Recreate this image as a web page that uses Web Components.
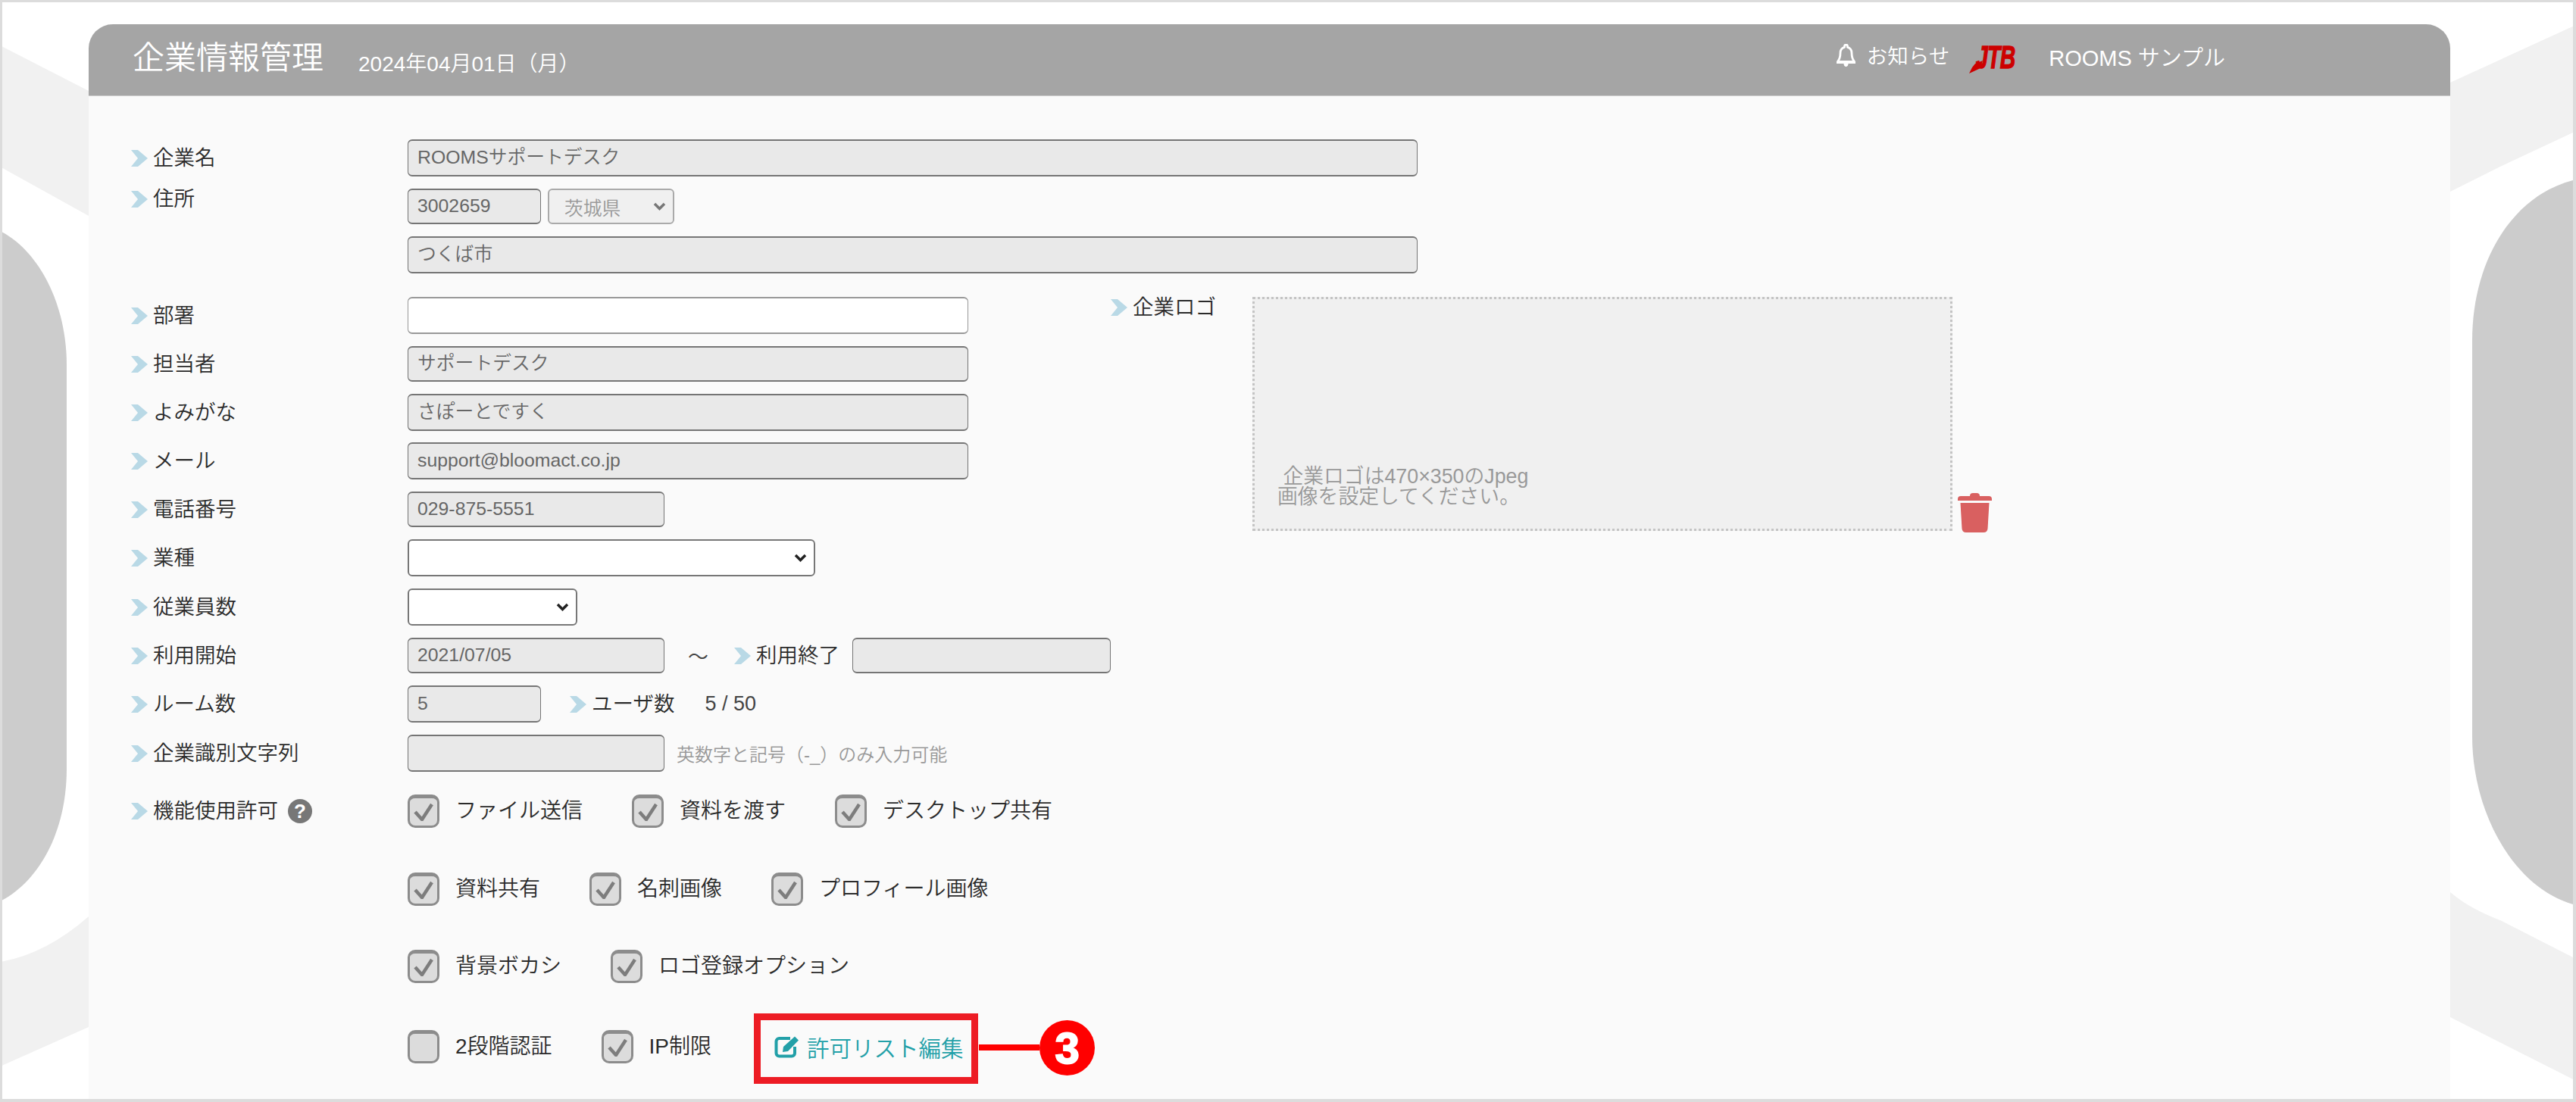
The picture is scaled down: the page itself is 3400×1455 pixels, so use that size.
<!DOCTYPE html>
<html lang="ja">
<head>
<meta charset="utf-8">
<title>企業情報管理</title>
<style>
  html, body { margin: 0; padding: 0; background: #fff; }
  body { font-family: "Liberation Sans", "Noto Sans CJK JP", sans-serif; font-weight: 350; color: #333; font-size: 27.5px; }
</style>
</head>
<body>
<page-frame>
  <panel-card>
    <panel-header slot="header" title-text="企業情報管理" date="2024年04月01日（月）" notice="お知らせ" user="ROOMS サンプル"></panel-header>

    <form-row label="企業名"><text-field width="1333" value="ROOMSサポートデスク"></text-field></form-row>
    <form-row label="住所" top gap="16">
      <text-field width="176" height="47" value="3002659"></text-field>
      <select-field width="167" height="47" value="茨城県" disabled style="margin-left:9px"></select-field>
    </form-row>
    <form-row gap="16"><text-field width="1333" value="つくば市"></text-field></form-row>

    <company-split style="margin-top:31px">
      <form-row label="部署"><text-field width="740" value="" enabled></text-field></form-row>
      <form-row label="担当者" gap="16"><text-field width="740" height="47" value="サポートデスク"></text-field></form-row>
      <form-row label="よみがな" gap="16"><text-field width="740" value="さぽーとですく"></text-field></form-row>
      <form-row label="メール" gap="15"><text-field width="740" value="support@bloomact.co.jp"></text-field></form-row>
      <form-row label="電話番号" gap="16"><text-field width="339" height="47" value="029-875-5551"></text-field></form-row>
      <form-row label="業種" gap="16"><select-field width="538" height="49"></select-field></form-row>
      <form-row label="従業員数" gap="16"><select-field width="224" height="49"></select-field></form-row>
      <form-row label="利用開始" gap="16">
        <text-field width="339" height="47" value="2021/07/05"></text-field>
        <plain-text style="margin-left:31px;margin-right:34px">～</plain-text>
        <form-label>利用終了</form-label>
        <text-field width="341" height="47" value="" style="margin-left:17px"></text-field>
      </form-row>
      <form-row label="ルーム数" gap="16">
        <text-field width="176" value="5"></text-field>
        <form-label style="margin-left:38px">ユーザ数</form-label>
        <plain-text style="margin-left:40px">5 / 50</plain-text>
      </form-row>
      <form-row label="企業識別文字列" gap="16">
        <text-field width="339" value=""></text-field>
        <plain-text hint style="margin-left:16px">英数字と記号（-_）のみ入力可能</plain-text>
      </form-row>
      <form-row label="機能使用許可" help gap="30">
        <check-item checked>ファイル送信</check-item>
        <check-item checked>資料を渡す</check-item>
        <check-item checked>デスクトップ共有</check-item>
      </form-row>
      <form-row gap="59">
        <check-item checked>資料共有</check-item>
        <check-item checked>名刺画像</check-item>
        <check-item checked>プロフィール画像</check-item>
      </form-row>
      <form-row gap="58">
        <check-item checked>背景ボカシ</check-item>
        <check-item checked>ロゴ登録オプション</check-item>
      </form-row>
      <form-row gap="62">
        <check-item>2段階認証</check-item>
        <check-item checked>IP制限</check-item>
        <edit-link>許可リスト編集</edit-link>
      </form-row>
      <logo-drop slot="aside"></logo-drop>
    </company-split>
  </panel-card>
</page-frame>

<script>
const CHEVRON = `<svg width="22" height="22" viewBox="0 0 22 22" style="display:block;flex:none"><path d="M0 0H9L22 11 9 22H0L9 11Z" fill="#b9d9e6"/></svg>`;

class PageFrame extends HTMLElement {
  constructor() {
    super();
    this.attachShadow({ mode: 'open' });
    this.shadowRoot.innerHTML = `
      <style>
        :host {
          display: block;
          position: relative;
          box-sizing: border-box;
          width: 3400px;
          height: 1455px;
          background: #fff;
          border: solid #dcdcdc;
          border-width: 3px 4px 4px 3px;
          padding: 29px 162px 0 114px;
          overflow: hidden;
        }
        svg { position: absolute; left: -3px; top: -3px; }
        .content { position: relative; height: 100%; }
      </style>
      <svg width="3400" height="1455" viewBox="0 0 3400 1455">
        <g fill="#f1f1f1">
          <path d="M0 60L117 120V285L0 220Z"/>
          <path d="M0 1270Q60 1260 117 1210V1356L0 1408Z"/>
          <path d="M3234 109L3400 33V173L3300 220Q3260 240 3234 253Z"/>
          <path d="M3234 1178Q3260 1200 3300 1215L3400 1266V1427L3234 1343Z"/>
        </g>
        <g fill="#cccccc">
          <path d="M0 305C50 330 88 400 88 482V1015C88 1100 50 1165 0 1190Z"/>
          <path d="M3400 237C3320 255 3263 340 3263 450V972C3263 1075 3320 1175 3400 1195Z"/>
        </g>
      </svg>
      <div class="content"><slot></slot></div>
    `;
  }
}

class PanelCard extends HTMLElement {
  constructor() {
    super();
    this.attachShadow({ mode: 'open' });
    this.shadowRoot.innerHTML = `
      <style>
        :host {
          display: flex;
          flex-direction: column;
          height: 100%;
          background: #fafafa;
          border-radius: 32px 32px 0 0;
        }
        .body { display: block; padding: 57px 0 0 56px; }
      </style>
      <slot name="header"></slot>
      <div class="body"><slot></slot></div>
    `;
  }
}

class PanelHeader extends HTMLElement {
  connectedCallback() {
    if (this.shadowRoot) return;
    this.attachShadow({ mode: 'open' });
    this.shadowRoot.innerHTML = `
      <style>
        :host {
          display: flex;
          box-sizing: border-box;
          height: 95px;
          padding-left: 58px;
          background: #a5a5a5;
          border-bottom: 1px solid #ccc;
          border-radius: 32px 32px 0 0;
          color: #fff;
        }
        .title { font-size: 42px; line-height: 50px; margin-top: 20px; }
        .date { font-size: 28px; line-height: 30px; margin: 38px 0 0 46px; }
        .right { margin-left: auto; padding-right: 297px; display: flex; align-items: flex-start; }
        .bell { margin-top: 26px; display: block; }
        .notice { font-size: 27.5px; line-height: 32px; margin: 27px 0 0 15px; }
        .logo { position: relative; width: 60px; height: 38px; margin: 28px 0 0 26px; overflow: visible; }
        .logo span {
          position: absolute;
          left: 9px;
          top: -6px;
          font: italic 700 43px/43px "Liberation Sans", sans-serif;
          color: #cc0000;
          letter-spacing: -1px;
          -webkit-text-stroke: 1.4px #cc0000;
          transform: scaleX(.66);
          transform-origin: left top;
        }
        .logo svg { position: absolute; left: 0; top: 0; }
        .user { font-size: 29px; line-height: 34px; margin: 28px 0 0 45px; }
      </style>
      <div class="title">${this.getAttribute('title-text')}</div>
      <div class="date">${this.getAttribute('date')}</div>
      <div class="right">
        <svg class="bell" width="25" height="31" viewBox="0 0 25 31">
          <path d="M12.5 1a2 2 0 0 1 2 2v1.4c3.600 1 5.500 4 5.500 7.600 0 5 .8 8 3.500 11.300H1.500C4.200 20 5 17 5 12c0-3.600 1.900-6.600 5.500-7.600V3a2 2 0 0 1 2-2Z" fill="none" stroke="#fff" stroke-width="2.800" stroke-linejoin="round"/>
          <path d="M0 23h25v3H0zM9.500 26h6c0 2.500-1.300 4-3 4s-3-1.500-3-4Z" fill="#fff"/>
        </svg>
        <div class="notice">${this.getAttribute('notice')}</div>
        <div class="logo">
          <svg width="30" height="38" viewBox="0 0 30 38"><path d="M8 24L18 20 15 30 0 37 4 29Z" fill="#cc0000"/></svg>
          <span>JTB</span>
        </div>
        <div class="user">${this.getAttribute('user')}</div>
      </div>
    `;
  }
}

class FormLabel extends HTMLElement {
  constructor() {
    super();
    this.attachShadow({ mode: 'open' });
    this.shadowRoot.innerHTML = `
      <style>
        :host {
          display: inline-flex;
          align-items: center;
          gap: 7px;
          height: 28px;
          white-space: nowrap;
          font-size: 27.500px;
          line-height: 28px;
          color: #2b2b2b;
        }
      </style>
      ${CHEVRON}<slot></slot>
    `;
  }
}

class FormRow extends HTMLElement {
  connectedCallback() {
    if (this.shadowRoot) return;
    const label = this.getAttribute('label');
    const help = this.hasAttribute('help') ? `
      <svg width="32" height="32" viewBox="0 0 32 32" style="margin-left:13px;flex:none">
        <circle cx="16" cy="16" r="16" fill="#777"/>
        <text x="16" y="25" text-anchor="middle" font-family="Liberation Sans" font-weight="700" font-size="26" fill="#fff">?</text>
      </svg>` : '';
    this.attachShadow({ mode: 'open' });
    this.shadowRoot.innerHTML = `
      <style>
        :host {
          display: grid;
          grid-template-columns: 365px 1fr;
          margin-top: ${this.getAttribute('gap') || 0}px;
        }
        .label { display: flex; align-items: center; align-self: ${this.hasAttribute('top') ? 'start' : 'center'}; }
        .fields { display: flex; align-items: center; }
      </style>
      <div class="label">${label ? `<form-label>${label}</form-label>` : ''}${help}</div>
      <div class="fields"><slot></slot></div>
    `;
  }
}

class TextField extends HTMLElement {
  connectedCallback() {
    if (this.shadowRoot) return;
    const enabled = this.hasAttribute('enabled');
    this.attachShadow({ mode: 'open' });
    this.shadowRoot.innerHTML = `
      <style>
        :host {
          display: block;
          flex: none;
          box-sizing: border-box;
          width: ${this.getAttribute('width')}px;
          height: ${this.getAttribute('height') || 49}px;
          padding: 0 12px;
          background: ${enabled ? '#fff' : '#e9e9e9'};
          border: 2px solid #777;
          border-width: 2px 1.500px;
          border-color: ${enabled ? '#999' : '#757575'};
          border-radius: 6px;
          color: #666;
          font-size: 24.800px;
          line-height: ${(this.getAttribute('height') || 49) - 6}px;
          white-space: nowrap;
        }
      </style>
      ${this.getAttribute('value') || ''}
    `;
  }
}

class SelectField extends HTMLElement {
  connectedCallback() {
    if (this.shadowRoot) return;
    const off = this.hasAttribute('disabled');
    this.attachShadow({ mode: 'open' });
    this.shadowRoot.innerHTML = `
      <style>
        :host {
          display: flex;
          flex: none;
          align-items: center;
          justify-content: space-between;
          box-sizing: border-box;
          width: ${this.getAttribute('width')}px;
          height: ${this.getAttribute('height')}px;
          padding: 0 9px 0 20px;
          background: ${off ? '#f0f0f0' : '#fff'};
          border: 2px solid ${off ? '#aaa' : '#777'};
          border-radius: 6px;
          color: #999;
          font-size: 24.800px;
        }
      </style>
      <span>${this.getAttribute('value') || ''}</span>
      <svg width="17" height="11" viewBox="0 0 17 11"><path d="M2 2l6.500 6.500L15 2" fill="none" stroke="${off ? '#777' : '#222'}" stroke-width="3.500"/></svg>
    `;
  }
}

class PlainText extends HTMLElement {
  connectedCallback() {
    if (this.shadowRoot) return;
    const hint = this.hasAttribute('hint');
    this.attachShadow({ mode: 'open' });
    this.shadowRoot.innerHTML = `
      <style>
        :host {
          display: inline-block;
          flex: none;
          white-space: nowrap;
          font-size: ${hint ? 24 : 27}px;
          color: ${hint ? '#999' : '#444'};
        }
      </style>
      <slot></slot>
    `;
  }
}

class CheckItem extends HTMLElement {
  connectedCallback() {
    if (this.shadowRoot) return;
    const on = this.hasAttribute('checked');
    this.attachShadow({ mode: 'open' });
    this.shadowRoot.innerHTML = `
      <style>
        :host {
          display: inline-flex;
          flex: none;
          align-items: center;
          gap: 21px;
          margin-right: 65px;
          white-space: nowrap;
          font-size: 28px;
          line-height: 30px;
          color: #2b2b2b;
        }
        .box {
          display: flex;
          align-items: center;
          justify-content: center;
          box-sizing: border-box;
          width: 42px;
          height: 44px;
          background: #dcdcdc;
          border: 3px solid #8c8c8c;
          border-top-width: 5px;
          border-radius: 10px;
        }
      </style>
      <div class="box">${on ? `<svg width="26" height="24" viewBox="0 0 26 24"><path d="M2 12l9 10L24 2" fill="none" stroke="#7d7d7d" stroke-width="4.500"/></svg>` : ''}</div>
      <span><slot></slot></span>
    `;
  }
}

class EditLink extends HTMLElement {
  constructor() {
    super();
    this.attachShadow({ mode: 'open' });
    this.shadowRoot.innerHTML = `
      <style>
        :host {
          display: inline-flex;
          flex: none;
          position: relative;
          align-items: center;
          gap: 9px;
          margin: 0 0 0 18px;
          height: 31px;
          white-space: nowrap;
          color: #22a0a8;
          font-size: 29.500px;
        }
        .box {
          position: absolute;
          box-sizing: border-box;
          left: -27px;
          top: -29px;
          width: 296px;
          height: 93px;
          border: 9px solid #ed1c24;
        }
        .line { position: absolute; left: 270px; top: 12px; width: 80px; height: 8px; background: #f00; }
        .num {
          position: absolute;
          left: 350px;
          top: -20px;
          width: 73px;
          height: 73px;
          border-radius: 50%;
          background: #f00;
          color: #fff;
          font: 900 58px/73px "Liberation Sans", sans-serif;
          -webkit-text-stroke: 2px #fff;
          text-align: center;
        }
      </style>
      <svg width="34" height="30" viewBox="0 0 34 30" style="flex:none">
        <path d="M21 4H6.500A4 4 0 0 0 2.500 8V23.500A4 4 0 0 0 6.500 27.500H23A4 4 0 0 0 27 23.500V15" fill="none" stroke="#22a0a8" stroke-width="4"/>
        <path d="M12 15L27 1.500 32 6.500 18 21 11 22Z" fill="#22a0a8"/>
      </svg>
      <slot></slot>
      <div class="box"></div>
      <div class="line"></div>
      <div class="num">3</div>
    `;
  }
}

class CompanySplit extends HTMLElement {
  constructor() {
    super();
    this.attachShadow({ mode: 'open' });
    this.shadowRoot.innerHTML = `
      <style>
        :host { display: flex; align-items: flex-start; }
        .left { width: 1293px; flex: none; }
      </style>
      <div class="left"><slot></slot></div>
      <slot name="aside"></slot>
    `;
  }
}

class LogoDrop extends HTMLElement {
  constructor() {
    super();
    this.attachShadow({ mode: 'open' });
    this.shadowRoot.innerHTML = `
      <style>
        :host { display: flex; align-items: flex-start; }
        form-label { width: 187px; margin-top: 0; }
        .drop {
          display: flex;
          flex-direction: column;
          justify-content: flex-end;
          box-sizing: border-box;
          width: 924px;
          height: 309px;
          padding: 0 0 28px 30px;
          background: #f0f0f0;
          border: 3px dotted #c4c4c4;
          color: #999;
          font-size: 26.800px;
          line-height: 27px;
          white-space: pre;
        }
        svg { align-self: flex-end; margin: 0 0 -2px 7px; }
      </style>
      <form-label>企業ロゴ</form-label>
      <div class="drop"><span> 企業ロゴは470×350のJpeg</span><span>画像を設定してください。</span></div>
      <svg width="45" height="52" viewBox="0 0 45 52">
        <path d="M16 4Q16 0 20 0H25Q29 0 29 4H41Q45 4 45 8V10H0V8Q0 4 4 4Z" fill="#d96060"/>
        <path d="M3.500 13H41.500L39.500 47Q39 52 34 52H11Q6 52 5.500 47Z" fill="#d96060"/>
      </svg>
    `;
  }
}

customElements.define('form-label', FormLabel);
customElements.define('form-row', FormRow);
customElements.define('text-field', TextField);
customElements.define('select-field', SelectField);
customElements.define('plain-text', PlainText);
customElements.define('check-item', CheckItem);
customElements.define('edit-link', EditLink);
customElements.define('company-split', CompanySplit);
customElements.define('logo-drop', LogoDrop);
customElements.define('panel-header', PanelHeader);
customElements.define('panel-card', PanelCard);
customElements.define('page-frame', PageFrame);
</script>
</body>
</html>
